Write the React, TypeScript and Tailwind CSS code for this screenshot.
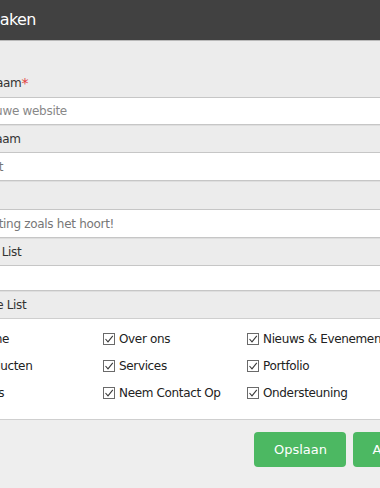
import React from 'react';

const pages = [
  ['Home', 'Over ons', 'Nieuws & Evenementen'],
  ['Producten', 'Services', 'Portfolio'],
  ['Links', 'Neem Contact Op', 'Ondersteuning'],
];

const LabelRow: React.FC<{ text: string; required?: boolean; h?: string; border?: boolean; pad?: string }> = ({
  text,
  required,
  h = 'h-[28px]',
  border = true,
  pad = 'px-[26px]',
}) => (
  <div
    className={`${h} ${pad} flex items-center bg-[#ececec] text-[#333] ${
      border ? 'border-t border-[#c6c6c6] shadow-[inset_0_1px_0_#dedede]' : ''
    }`}
  >
    {text}
    {required && <span className="text-[#e23b3b] align-super text-[14px] leading-none">*</span>}
  </div>
);

const InputRow: React.FC<{ value?: string; placeholder?: string; h?: string }> = ({
  value,
  placeholder,
  h = 'h-[28px]',
}) => (
  <div className={`${h} border-t border-[#c6c6c6] bg-white`}>
    <input
      readOnly
      value={value ?? ''}
      placeholder={placeholder}
      className="w-full h-full px-[26px] bg-white outline-none text-[#777] placeholder:text-[#888] tracking-[-0.3px]"
    />
  </div>
);

const Check: React.FC<{ label: string }> = ({ label }) => (
  <div className="flex items-center gap-[4px] h-[27px]">
    <span className="w-[12px] h-[12px] border border-[#6a6a6a] bg-white flex items-center justify-center shrink-0">
      <svg width="10" height="10" viewBox="0 0 10 10">
        <polyline points="1.5,5 4,7.8 8.8,1.8" fill="none" stroke="#3a3a3a" strokeWidth="1.1" />
      </svg>
    </span>
    <span className="text-[#222] whitespace-nowrap">{label}</span>
  </div>
);

export default function App() {
  return (
    <div className="w-[380px] h-[488px] overflow-hidden bg-[#eeeeee] font-['DejaVu_Sans',sans-serif] text-[12px] tracking-[-0.35px]">
      <div className="-ml-[86px] w-[560px] flex flex-col">
        <div className="h-[41px] bg-[#414141] border-b border-[#b9b9b9] flex items-center px-[10px] text-white text-[16px] tracking-[-0.6px]">
          Site aanmaken
        </div>

        <div className="pt-[28px] bg-[#ececec]">
          <LabelRow text="Website naam" required border={false} />
          <InputRow placeholder="Naam nieuwe website" h="h-[27px]" />
          <LabelRow text="Domein naam" />
          <InputRow value="Het project" />
          <LabelRow text="Slogan" h="h-[29px]" />
          <InputRow value="Snelle hosting zoals het hoort!" />
          <LabelRow text="Categorie List" pad="px-[29px]" />
          <InputRow h="h-[25px]" />
          <LabelRow text="Paginatype List" />
        </div>

        <div className="h-[102px] bg-white border-y border-[#cfcfcf] pt-[6px] pl-[45px]">
          {pages.map((row, i) => (
            <div key={i} className="grid grid-cols-[144px_144px_144px]">
              {row.map((p) => (
                <Check key={p} label={p} />
              ))}
            </div>
          ))}
        </div>

        <div className="h-[68px] bg-[#eeeeee] flex justify-end items-start gap-[7px] pt-[12px] pr-[16px]">
          <button className="w-[92px] h-[35px] rounded-[4px] bg-[#4cb862] text-white text-[13px] tracking-normal">
            Opslaan
          </button>
          <button className="h-[35px] px-[19px] rounded-[4px] bg-[#4cb862] text-white text-[13px] tracking-normal">
            Annuleren
          </button>
        </div>
      </div>
    </div>
  );
}
